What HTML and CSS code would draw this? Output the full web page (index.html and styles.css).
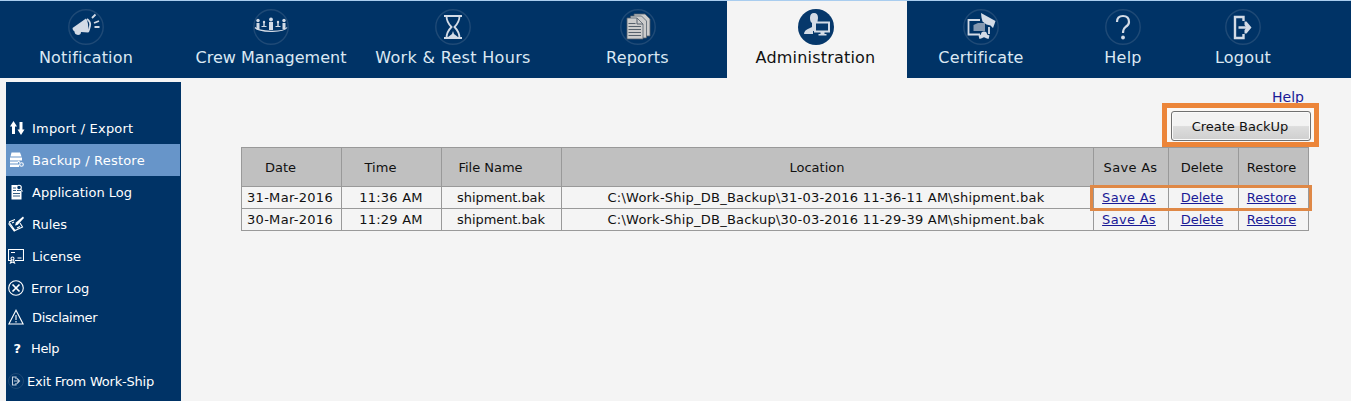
FILE: index.html
```html
<!DOCTYPE html>
<html lang="en">
<head>
<meta charset="utf-8">
<title>Backup / Restore</title>
<link rel="stylesheet" href="styles.css">
</head>
<body>
<nav class="topnav">
  <a class="tab notification"><svg class="disc" viewBox="0 0 36 38"><circle class="ring" cx="18" cy="19" r="17.2"/><path class="fill" d="M4.500 20 18 10.500q3 4 2 14l-7-.5q0 3-3 3-3.500-.5-3.500-3.500Q4.500 23 4.500 20z"/><path class="line" d="M19 11q4 3 3 7t-2 6M24 10l3.500-3.500M26 15l5-2M26.500 19h5"/></svg><span>Notification</span></a>
  <a class="tab crew"><svg class="disc" viewBox="0 0 36 38"><circle class="ring" cx="18" cy="19" r="17.2"/><g class="fill"><circle cx="5" cy="12.500" r="1.700"/><circle cx="11" cy="14" r="1.200"/><circle cx="18" cy="11.500" r="1.900"/><circle cx="25" cy="14" r="1.200"/><circle cx="31" cy="12.500" r="1.700"/><path d="M3.500 15h3v6h-3zM10.300 14h1.400v5h-1.400zM16 14h4v8h-4zM24.300 14h1.400v5h-1.400zM29.500 15h3v6h-3z"/></g><path class="thin" d="M2 19.500Q5 23 18 23.300T34 19.500M8.500 18.500h5M22.500 18.500h5"/></svg><span>Crew Management</span></a>
  <a class="tab work"><svg class="disc" viewBox="0 0 36 38"><circle class="ring" cx="18" cy="19" r="17.2"/><path class="line" d="M9 8h18M9 30h18M11.500 8q0 6 5 11-5 5-5 11M24.500 8q0 6-5 11 5 5 5 11"/><path class="fill" d="M18 23l1 3 4 3H13l4-3z"/></svg><span>Work &amp; Rest Hours</span></a>
  <a class="tab reports"><svg class="disc" viewBox="0 0 36 38"><circle class="ring" cx="18" cy="19" r="17.2"/><path class="paper" d="M14 6h11l5 5v17H14z"/><path class="paper" d="M10.500 8h11l5 5v17h-16z"/><path class="paper" d="M7 10h10l6 6v15H7z"/><path class="dark" d="M17 10v6h6M8.500 15.500h7M8.500 18.500h12.500M8.500 21.500h12.500M8.500 24.500h12.500M8.500 27.500h12.500"/></svg><span>Reports</span></a>
  <a class="tab admin active"><svg class="disc" viewBox="0 0 36 38"><circle class="disc-fill" cx="18" cy="19" r="18"/><path class="fill" d="M12 10q0-5 4-5t4 5q0 4-2 6v7h-3v3H6q0-4 6-6l2-1v-4q-2-1-2-5z"/><path class="screen" d="M17 14.500h14v9H17z"/><path class="fill" d="M22.500 24h4v2h2v1.500h-8V26h2z"/></svg><span>Administration</span></a>
  <a class="tab certificate"><svg class="disc" viewBox="0 0 36 38"><circle class="ring" cx="18" cy="19" r="17.2"/><path class="line" d="M17 12H5.500v14.500H17M26 19v7"/><path class="grey" d="M10.500 17 15 15h7v8H10.500z"/><path class="fill" d="M18 5l14.500 8-1 3-1.500 4-2.500-2.500-4-1-4-3-1-4z"/><circle class="fill" cx="21" cy="26.500" r="3"/><path class="fill" d="M19 26l-3.500 1.500 1 3.500 3-1 1.500-2 1.500 2 3 1 1-3.500L23 26z"/></svg><span>Certificate</span></a>
  <a class="tab help"><svg class="disc" viewBox="0 0 36 38"><circle class="ring" cx="18" cy="19" r="17.2"/><path class="hook" d="M12 14q0-6 6-6t6 6q0 3-3.500 5-2.500 2-2.500 6"/><circle class="fill" cx="18" cy="29.500" r="1.900"/></svg><span>Help</span></a>
  <a class="tab logout"><svg class="disc" viewBox="0 0 36 38"><circle class="ring" cx="18" cy="19" r="17.2"/><path class="line door" d="M18.500 13V9H10v21h8.500v-4M13.500 19.500h10"/><path class="fill" d="M19.500 13.500h2l5 6-5 6h-2v-3.500l2-2.500-2-2.500z"/></svg><span>Logout</span></a>
</nav>
<div class="body">
  <aside class="sidebar">
    <a class="item wide"><svg viewBox="0 0 16 16"><path class="w" d="M4.500 1 1 6.500H3V14h3V6.500h2zM12 15 8.500 9.500h2V2h3v7.500h2z"/></svg><span>Import / Export</span></a>
    <a class="item wide selected"><svg viewBox="0 0 16 16"><path class="w" d="M2.500.5h8.500l1.500 4H1.500zM1 5.500h12V8.500H1zM1 9.500h8v2H1zM1 12.500h9V15H1z"/><path class="o" d="M9 9l2 1.500"/><circle class="o" cx="12.500" cy="12.500" r="1.800"/></svg><span>Backup / Restore</span></a>
    <a class="item"><svg viewBox="0 0 16 16"><path class="w" d="M2.500 1H8v6h4.500v8.500h-10z"/><path class="n" d="M4 4h3M4 6.500h3M4 9.500h7M4 12h7"/><circle class="o" cx="10" cy="3.500" r="2.300"/><path class="o" d="M11.500 5l2 2.500"/></svg><span>Application Log</span></a>
    <a class="item rules"><svg viewBox="0 0 16 16"><path class="o" d="M1 6 7 3.500M1 6l6 8.500 7.500-3.500-2.500-4M.5 7.500 6.500 15.500"/><path class="w" d="M7 9.500 8 6.500 15 .5 16 2 9.500 9z"/><path class="o" d="M4 7l2-1M9 12l3-1.500"/></svg><span>Rules</span></a>
    <a class="item license"><svg viewBox="0 0 16 16"><path class="o" d="M3 12.500H.5V1.500h15v11H7M3 4.500h4M9.500 10h4"/><circle class="o" cx="4.500" cy="10.500" r="1.500"/><path class="o" d="M3.500 12 2.500 15l2-1 2 1-1-3"/></svg><span>License</span></a>
    <a class="item error"><svg viewBox="0 0 16 16"><circle class="o" cx="8" cy="8" r="7.300"/><path class="x" d="M4.500 4.500l7 7M11.500 4.500l-7 7"/></svg><span>Error Log</span></a>
    <a class="item disclaimer"><svg viewBox="0 0 16 16"><path class="o" d="M8 1.200.9 15H15.100zM8 6v5M8 12v1.500"/></svg><span>Disclaimer</span></a>
    <a class="item side-help"><b class="mark">?</b><span>Help</span></a>
    <a class="item exit"><svg viewBox="0 0 16 16"><circle class="faint" cx="8" cy="8" r="7.500"/><path class="pale" d="M8 6V4H4.500v8H8v-2M6 8h5M9 5.500 11.500 8 9 10.500"/></svg><span>Exit From Work-Ship</span></a>
  </aside>
  <main class="content">
    <a class="page-help">Help</a>
    <div class="callout"><button class="create">Create BackUp</button></div>
    <div class="grid-wrap">
      <table class="backups">
        <colgroup><col class="c1"><col class="c1"><col class="c3"><col class="c4"><col class="c5"><col class="c6"><col class="c6"></colgroup>
        <thead><tr><th class="h-date">Date</th><th class="h-time">Time</th><th class="h-file">File Name</th><th class="h-loc">Location</th><th class="h-save">Save As</th><th class="del">Delete</th><th class="restore">Restore</th></tr></thead>
        <tbody>
          <tr><td class="date">31-Mar-2016</td><td class="time">11:36 AM</td><td class="file">shipment.bak</td><td class="loc">C:\Work-Ship_DB_Backup\31-03-2016 11-36-11 AM\shipment.bak</td><td class="save"><a>Save As</a></td><td class="del"><a>Delete</a></td><td class="restore"><a>Restore</a></td></tr>
          <tr><td class="date">30-Mar-2016</td><td class="time">11:29 AM</td><td class="file">shipment.bak</td><td class="loc">C:\Work-Ship_DB_Backup\30-03-2016 11-29-39 AM\shipment.bak</td><td class="save"><a>Save As</a></td><td class="del"><a>Delete</a></td><td class="restore"><a>Restore</a></td></tr>
        </tbody>
      </table>
      <div class="row-highlight"></div>
    </div>
  </main>
</div>
</body>
</html>
```
FILE: styles.css
```css
* { box-sizing: border-box; }
body { margin: 0; height: 401px; overflow: hidden; background: #f4f4f4; font-family: Verdana, "DejaVu Sans", sans-serif; font-size: 13px; color: #111; }
.topnav { display: flex; height: 78px; background: #003366; border-top: 1px solid #a9cdef; }
.tab { display: flex; flex-direction: column; align-items: center; padding-top: 7px; color: #dbe8f3; font-size: 16px; line-height: 20px; white-space: nowrap; }
.tab span { margin-top: 2px; }
.disc { width: 36px; height: 38px; flex: none; }
.notification { width: 182px; padding-right: 10px; letter-spacing: .2px; }
.crew { width: 178px; }
.work { width: 186px; letter-spacing: .32px; }
.reports { width: 181px; padding-left: 2px; letter-spacing: .2px; }
.admin { width: 180px; padding-right: 3px; letter-spacing: .2px; }
.certificate { width: 148px; letter-spacing: .2px; }
.help { width: 136px; letter-spacing: .2px; }
.logout { width: 104px; letter-spacing: .2px; }
.active { background: #f4f4f4; color: #111; }
.ring { fill: none; stroke: #1f4a76; stroke-width: 1.4; }
.disc-fill { fill: #06386b; }
.fill { fill: #d3dbe6; }
.line, .thin, .hook { fill: none; stroke: #d3dbe6; stroke-width: 1.8; }
.thin { stroke-width: 1.2; }
.hook { stroke-width: 2.2; }
.line.door { stroke-width: 2.4; }
.paper { fill: #ccc; stroke: #53606c; stroke-width: .8; }
.dark { fill: none; stroke: #56616c; stroke-width: 1; }
.screen { fill: #06386b; stroke: #d3dbe6; stroke-width: 2; }
.grey { fill: #8498b0; }
.body { display: flex; height: 323px; }
.sidebar { width: 175px; margin: 4px 0 0 6px; padding-top: 30px; background: #003366; color: #fff; }
.item { display: flex; align-items: center; height: 32px; padding-left: 3px; white-space: nowrap; }
.item svg { width: 16px; height: 16px; margin-right: 7px; flex: none; }
.item.wide { letter-spacing: .2px; }
.item.selected { width: 174px; background: #6795c9; }
.item.rules, .item.license, .item.error, .item.disclaimer { padding-left: 2px; }
.rules svg, .license svg, .disclaimer svg { margin-right: 8px; }
.item.error { letter-spacing: -.1px; }
.item.disclaimer { height: 26px; letter-spacing: -.35px; }
.item.side-help { height: 36px; padding-top: 1px; letter-spacing: -.4px; }
.item.exit { height: 30px; padding-left: 2px; letter-spacing: -.21px; }
.exit svg { margin-right: 3px; }
.mark { width: 16px; margin-right: 6px; text-align: center; font-size: 13px; }
.w { fill: #fff; }
.o, .x, .n, .pale { fill: none; stroke: #fff; stroke-width: 1.1; }
.x { stroke-width: 1.7; }
.n { stroke: #003366; stroke-width: .8; }
.faint { fill: none; stroke: #1f4a76; }
.pale { stroke: #c6d2df; }
.content { flex: 1; display: flex; flex-direction: column; padding: 9px 0 0 60px; }
.page-help { align-self: flex-end; margin-right: 47px; height: 16px; font-size: 14px; line-height: 20px; color: #1a1a96; text-decoration: underline; }
.callout { position: relative; z-index: 1; align-self: flex-end; display: flex; width: 157px; height: 44px; margin-right: 32px; padding: 3px 3px 0 4px; border: 5px solid #ec8539; background: #fbf8f5; }
.create { width: 140px; height: 30px; padding: 0 2px 0 0; border: 1px solid #707070; border-radius: 3px; background: linear-gradient(#f3f3f3 0 48%, #dddddd 52%, #cfcfcf); box-shadow: inset 0 0 0 1px #fafafa; font: inherit; color: #111; }
.grid-wrap { position: relative; width: 1068px; }
.backups { width: 1068px; border-collapse: collapse; table-layout: fixed; }
.c1 { width: 100px; }
.c3 { width: 120px; }
.c4 { width: 532px; }
.c5 { width: 75px; }
.c6 { width: 70px; }
.backups th, .backups td { padding: 0; border: 1px solid #999; text-align: center; font-weight: normal; line-height: 16px; white-space: nowrap; }
.backups th { height: 39px; padding-top: 2px; background: #c0c0c0; }
.backups td { height: 22px; }
.backups .h-date { padding-right: 22px; }
.backups .h-time { padding-right: 22px; }
.backups .h-file { padding-right: 22px; }
.backups .h-loc { padding-right: 21px; }
.backups .h-save { padding-right: 1px; letter-spacing: .3px; }
.backups .del { padding-right: 3px; }
.backups .restore { padding-right: 4px; }
.backups .date { padding-right: 3px; letter-spacing: .3px; }
.backups .time { padding-right: 1px; letter-spacing: .2px; }
.backups .file { padding-right: 1px; letter-spacing: -.08px; }
.backups .loc { padding-right: 3px; letter-spacing: .225px; }
.backups .save { padding-right: 4px; letter-spacing: .3px; }
.backups a { color: #1a1a96; text-decoration: underline; }
.row-highlight { position: absolute; left: 849px; top: 38px; width: 222px; height: 26px; border: 3px solid #df8846; }
```
